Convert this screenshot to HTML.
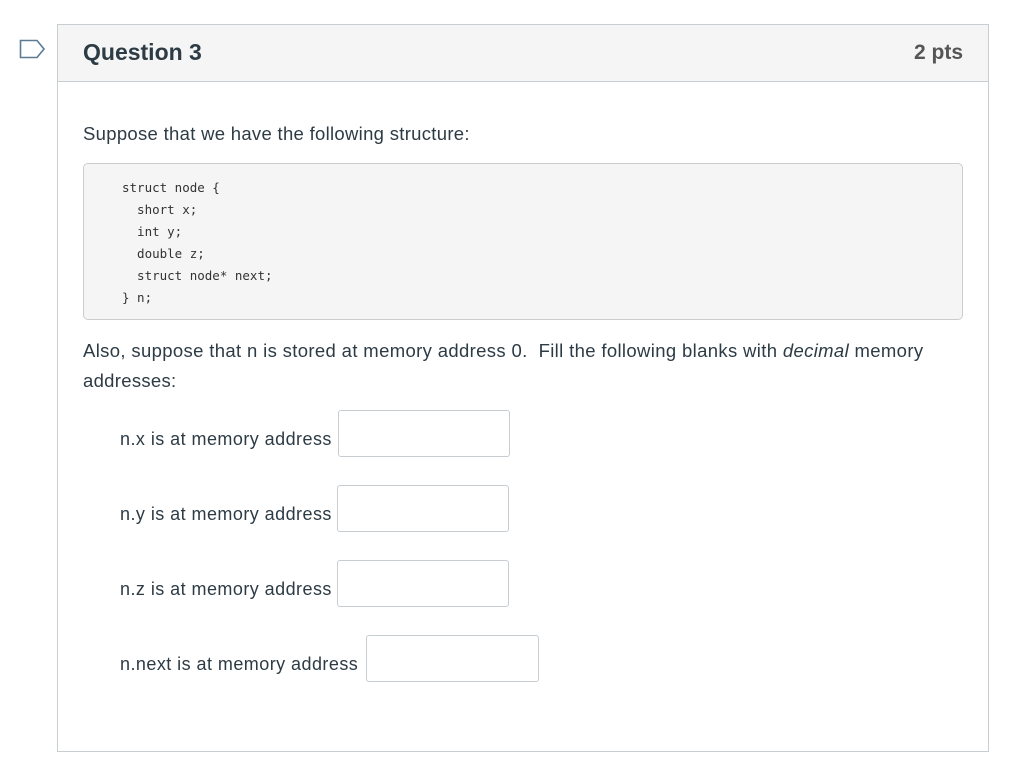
<!DOCTYPE html>
<html><head><meta charset="utf-8"><style>
body{margin:0;width:1013px;height:778px;background:#fff;font-family:"Liberation Sans",sans-serif;color:#2d3b45;position:relative;overflow:hidden}
.a{position:absolute;white-space:nowrap}
.box{position:absolute;left:57px;top:24px;width:930px;height:726px;border:1px solid #c7cdd1}
.hdr{position:absolute;left:0;top:0;width:930px;height:56px;background:#f5f5f5;border-bottom:1px solid #c7cdd1}
.code{position:absolute;left:83px;top:163px;width:878px;height:155px;background:#f5f5f5;border:1px solid #ccc;border-radius:5px}
.code pre{margin:0;position:absolute;left:38px;top:13px;font-family:"DejaVu Sans Mono","Liberation Mono",monospace;font-size:12.5px;line-height:22px;color:#333}
.t{font-size:18.5px;letter-spacing:0.3px}
.l{font-size:18px;letter-spacing:0.45px}
.in{position:absolute;border:1px solid #c7cdd1;border-radius:3px;background:#fff;height:45px}
</style></head><body>
<svg class="a" style="left:19px;top:39px" width="28" height="21"><path d="M1.5 1.5H18L25 10L18 18.5H1.5Z" fill="#fff" stroke="#5b7a93" stroke-width="1.6"/></svg>
<div class="box"><div class="hdr">
<div class="a" style="left:25px;top:14px;font-size:23px;font-weight:bold;letter-spacing:0px;color:#2d3b45">Question 3</div>
<div class="a" style="right:25px;top:16px;font-size:21px;font-weight:bold;letter-spacing:0px;color:#555">2 pts</div>
</div></div>
<div class="a t" style="left:83px;top:123px">Suppose that we have the following structure:</div>
<div class="code"><pre>struct node {
  short x;
  int y;
  double z;
  struct node* next;
} n;</pre></div>
<div class="a t" style="left:83px;top:340px;letter-spacing:0.35px">Also, suppose that n is stored at memory address 0.&nbsp; Fill the following blanks with <i>decimal</i> memory</div>
<div class="a t" style="left:83px;top:370px">addresses:</div>
<div class="a l" style="left:120px;top:429px">n.x is at memory address</div>
<div class="in" style="left:338px;top:410px;width:170px"></div>
<div class="a l" style="left:120px;top:504px">n.y is at memory address</div>
<div class="in" style="left:337px;top:485px;width:170px"></div>
<div class="a l" style="left:120px;top:579px">n.z is at memory address</div>
<div class="in" style="left:337px;top:560px;width:170px"></div>
<div class="a l" style="left:120px;top:654px">n.next is at memory address</div>
<div class="in" style="left:366px;top:635px;width:171px"></div>
</body></html>
